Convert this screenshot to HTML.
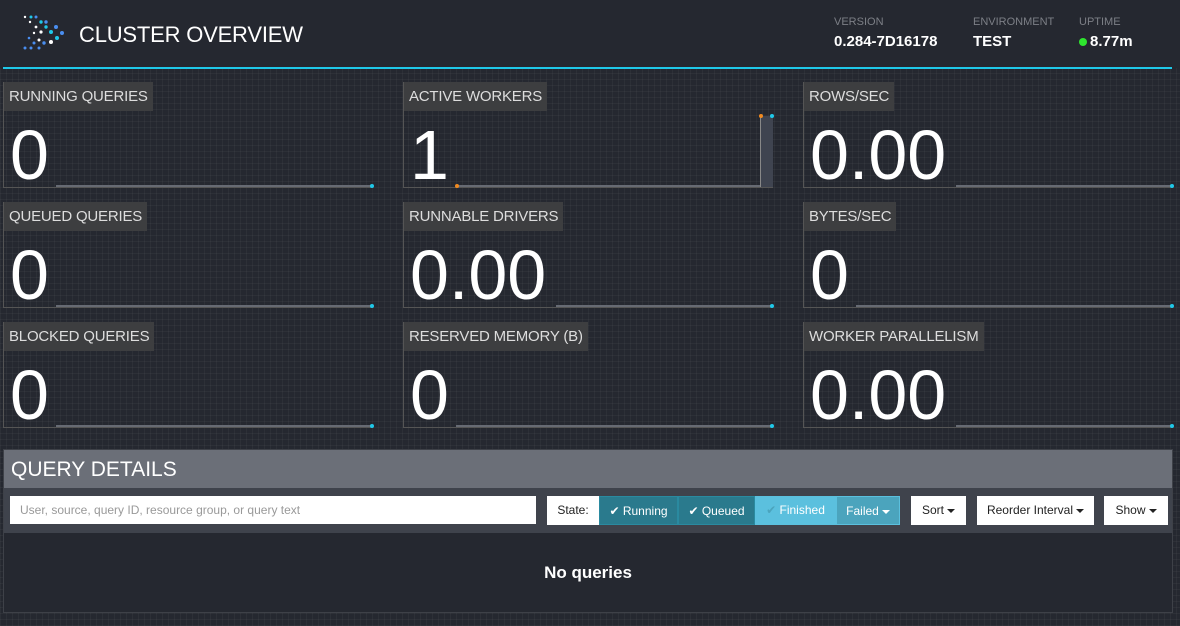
<!DOCTYPE html>
<html><head><style>
*{box-sizing:border-box;margin:0;padding:0}
body{width:1180px;height:626px;overflow:hidden;background:#252830;font-family:"Liberation Sans",sans-serif;color:#fff;position:relative;
background-image:repeating-linear-gradient(0deg,rgba(255,255,255,0.035) 0 1px,transparent 1px 6px),repeating-linear-gradient(90deg,rgba(255,255,255,0.035) 0 1px,transparent 1px 6px);}
.hdr{position:absolute;left:0;top:0;width:1180px;height:68px;background:#252830}
.line{position:absolute;left:3px;top:67px;width:1169px;height:2px;background:#1fc8e8}
.title{position:absolute;left:79px;top:22px;font-size:22px;letter-spacing:-0.2px}
.meta{position:absolute;top:16px}
.meta .k{font-size:11px;color:#7c7f86}
.meta .v{font-size:15px;font-weight:bold;margin-top:5px}
.tile{position:absolute;width:370px;height:106px;border-left:1px solid #555;border-bottom:1px solid #555}
.lab{position:absolute;left:0;top:0;height:29px;background:#3d3e40;color:#ddd;font-size:15px;padding:6px 5px 0 5px;white-space:nowrap;letter-spacing:-0.2px}
.val{position:absolute;left:6px;top:33px;font-size:70px;line-height:80px}
.spark{position:absolute;left:52px;bottom:0;width:316px;height:2px;background:#666a73}
.dot{position:absolute;right:-2px;bottom:-1px;width:4px;height:4px;border-radius:2px;background:#1fc8e8}
.panel{position:absolute;left:3px;top:449px;width:1170px;height:164px;border:1px solid #3e4148;background:#252830}
.ph{height:38px;background:#6b6f78;font-size:21px;padding:8px 7px}
.tb{height:45px;background:#3f434c;position:relative}
.inp{position:absolute;left:6px;top:8px;width:526px;height:28px;background:#fff;color:#999;font-size:12px;padding:7px 10px}
.btn{position:absolute;top:8px;height:29px;font-size:12px;padding:7px 0;text-align:center;color:#222;background:#fff}
.nq{text-align:center;font-weight:bold;font-size:17px;padding-top:30px}
.car{display:inline-block;border-left:4px solid transparent;border-right:4px solid transparent;border-top:4px solid currentColor;vertical-align:middle;margin-left:3px}
</style></head><body>
<div class="hdr">
<svg style="position:absolute;left:22px;top:14px" width="44" height="38">
<g fill="#fff"><circle cx="3" cy="3" r="1.2"/><circle cx="8" cy="8" r="1.2"/><circle cx="14" cy="13" r="1.4"/><circle cx="19" cy="18" r="1.6"/><circle cx="12" cy="19" r="1.2"/><circle cx="17" cy="26" r="1.5"/><circle cx="29" cy="28" r="2"/></g>
<g fill="#1fc8e8"><circle cx="9" cy="3" r="1.5"/><circle cx="19" cy="8" r="1.7"/><circle cx="24" cy="13" r="1.7"/><circle cx="29" cy="18" r="2"/><circle cx="35" cy="24" r="2"/></g>
<g fill="#4a8ef0"><circle cx="14" cy="3" r="1.5"/><circle cx="24" cy="8" r="1.7"/><circle cx="34" cy="13" r="2"/><circle cx="40" cy="19" r="2"/><circle cx="7" cy="24" r="1.3"/><circle cx="12" cy="29" r="1.5"/><circle cx="22" cy="29" r="1.7"/><circle cx="3" cy="34" r="1.5"/><circle cx="9" cy="34" r="1.5"/><circle cx="17" cy="34" r="1.5"/></g>
</svg>
<div class="title">CLUSTER OVERVIEW</div>
<div class="meta" style="left:834px"><div class="k">VERSION</div><div class="v">0.284-7D16178</div></div>
<div class="meta" style="left:973px"><div class="k">ENVIRONMENT</div><div class="v">TEST</div></div>
<div class="meta" style="left:1079px"><div class="k">UPTIME</div><div class="v"><span style="display:inline-block;width:8px;height:8px;border-radius:4px;background:#2ee62e;vertical-align:middle;margin-right:3px"></span>8.77m</div></div>
</div>
<div class="line"></div>

<div class="tile" style="left:3px;top:82px"><div class="lab">RUNNING QUERIES</div><div class="val">0</div><div class="spark"><div class="dot"></div></div></div>
<div class="tile" style="left:403px;top:82px"><div class="lab">ACTIVE WORKERS</div><div class="val">1</div><div class="spark"></div>
<div style="position:absolute;left:356px;top:34px;width:13px;height:71px;background:#3f4450;border-left:1px solid #888"></div>
<div style="position:absolute;left:355px;top:32px;width:4px;height:4px;border-radius:2px;background:#f08a20"></div>
<div style="position:absolute;left:366px;top:32px;width:4px;height:4px;border-radius:2px;background:#1fc8e8"></div>
<div style="position:absolute;left:51px;bottom:-1px;width:4px;height:4px;border-radius:2px;background:#f08a20"></div></div>
<div class="tile" style="left:803px;top:82px"><div class="lab">ROWS/SEC</div><div class="val">0.00</div><div class="spark" style="left:152px;width:216px"><div class="dot"></div></div></div>

<div class="tile" style="left:3px;top:202px"><div class="lab">QUEUED QUERIES</div><div class="val">0</div><div class="spark"><div class="dot"></div></div></div>
<div class="tile" style="left:403px;top:202px"><div class="lab">RUNNABLE DRIVERS</div><div class="val">0.00</div><div class="spark" style="left:152px;width:216px"><div class="dot"></div></div></div>
<div class="tile" style="left:803px;top:202px"><div class="lab">BYTES/SEC</div><div class="val">0</div><div class="spark"><div class="dot"></div></div></div>

<div class="tile" style="left:3px;top:322px"><div class="lab">BLOCKED QUERIES</div><div class="val">0</div><div class="spark"><div class="dot"></div></div></div>
<div class="tile" style="left:403px;top:322px"><div class="lab">RESERVED MEMORY (B)</div><div class="val">0</div><div class="spark"><div class="dot"></div></div></div>
<div class="tile" style="left:803px;top:322px"><div class="lab">WORKER PARALLELISM</div><div class="val">0.00</div><div class="spark" style="left:152px;width:216px"><div class="dot"></div></div></div>

<div class="panel">
<div class="ph">QUERY DETAILS</div>
<div class="tb">
<div class="inp">User, source, query ID, resource group, or query text</div>
<div class="btn" style="left:543px;width:52px">State:</div>
<div class="btn" style="left:595px;width:79px;background:#2a7a8d;color:#fff;border:1px solid #2a8aa0">✔ Running</div>
<div class="btn" style="left:674px;width:77px;background:#2a7a8d;color:#fff;border:1px solid #2a8aa0">✔ Queued</div>
<div class="btn" style="left:751px;width:81px;background:#5bc0de;color:#fff"><span style="color:#4ba4bd">✔</span> Finished</div>
<div class="btn" style="left:832px;width:64px;background:#4ba4bd;color:#fff;border:1px solid #5bc0de">Failed<span class="car"></span></div>
<div class="btn" style="left:907px;width:55px">Sort<span class="car"></span></div>
<div class="btn" style="left:973px;width:117px">Reorder Interval<span class="car"></span></div>
<div class="btn" style="left:1100px;width:64px">Show<span class="car"></span></div>
</div>
<div class="nq">No queries</div>
</div>
</body></html>
